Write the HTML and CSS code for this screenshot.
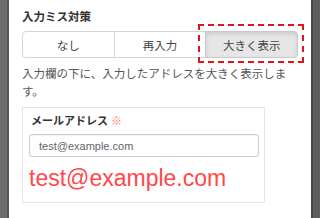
FILE: index.html
```html
<!DOCTYPE html>
<html>
  <head>
    <title>入力ミス対策</title>
    <meta charset="UTF-8" />
    <link rel="stylesheet" href="styles.css">
  </head>

  <body>
    <div class="edge edge-left"></div>
    <div class="panel">
      <div class="heading">入力ミス対策</div>
      <div class="segments">
        <div class="segment">なし</div>
        <div class="segment">再入力</div>
        <div class="segment active">
          大きく表示
          <div class="highlight"></div>
        </div>
      </div>
      <p class="note">入力欄の下に、入力したアドレスを大きく表示します。</p>
      <div class="card">
        <div class="label">メールアドレス <span class="required">※</span></div>
        <div class="field">test@example.com</div>
        <div class="preview">test@example.com</div>
      </div>
    </div>
    <div class="edge edge-right"></div>
  </body>
</html>
```

FILE: styles.css
```css
* {
  box-sizing: border-box;
  margin: 0;
}

body {
  height: 218px;
  overflow: hidden;
  display: flex;
  font-family: "Liberation Sans", "Noto Sans CJK JP", sans-serif;
  color: #333333;
}

.edge {
  width: 9px;
  background: #6e6e6e;
}

.edge-left {
  border-right: 2px solid #575757;
}

.edge-right {
  border-left: 2px solid #474747;
  background: #5f5f5f;
}

.panel {
  flex: 1;
  background: #ffffff;
  padding: 10px 13px 0 13px;
}

.heading {
  font-size: 11.5px;
  font-weight: bold;
  line-height: 14px;
  margin-bottom: 7px;
}

.segments {
  display: flex;
  height: 27px;
}

.segment {
  position: relative;
  flex: 1;
  display: flex;
  align-items: center;
  justify-content: center;
  font-size: 11.5px;
  color: #444444;
  background: #ffffff;
  border: 1px solid #d4d4d4;
  margin-left: -1px;
}

.segment:first-child {
  margin-left: 0;
  border-radius: 4px 0 0 4px;
}

.segment:last-child {
  border-radius: 0 4px 4px 0;
}

.segment.active {
  background: #e6e6e6;
  border-color: #c8c8c8;
  box-shadow: inset 0 2px 4px rgba(0, 0, 0, 0.12);
}

.highlight {
  position: absolute;
  top: -8px;
  left: -8px;
  right: -7px;
  bottom: -6px;
  border: 2px dashed #e0141c;
}

.note {
  font-size: 11.5px;
  line-height: 18px;
  color: #555555;
  margin-top: 7px;
}

.card {
  margin-top: 6px;
  width: 243px;
  border: 1px solid #e4e4e2;
  padding: 6px 5px 12px 6px;
}

.label {
  font-size: 11px;
  font-weight: bold;
  line-height: 14px;
  padding-left: 2px;
}

.required {
  color: #ff7777;
  font-weight: normal;
}

.field {
  margin-top: 6px;
  height: 23px;
  border: 1px solid #cccccc;
  border-radius: 3px;
  box-shadow: inset 0 1px 1px rgba(0, 0, 0, 0.05);
  padding-left: 9px;
  display: flex;
  align-items: center;
  font-size: 11px;
  color: #666666;
}

.preview {
  margin-top: 10px;
  font-size: 23px;
  line-height: 23px;
  color: #ff4848;
}
```
